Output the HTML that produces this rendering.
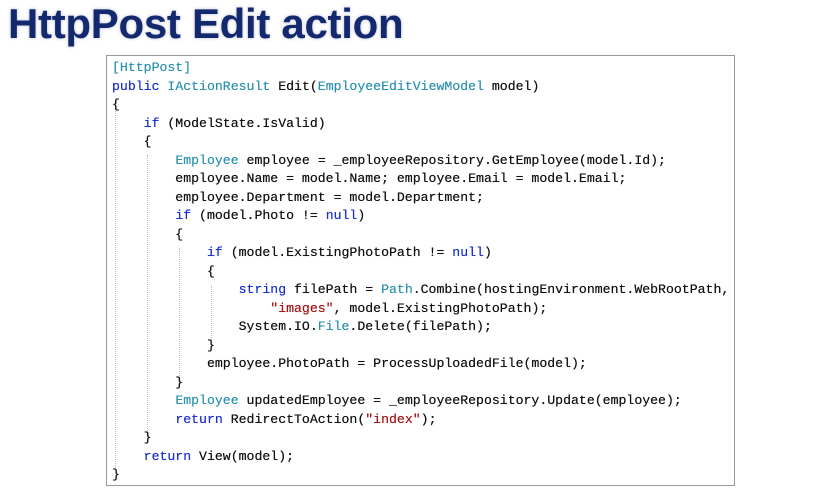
<!DOCTYPE html>
<html><head><style>
body{margin:0;width:839px;height:494px;background:#fff;position:relative;overflow:hidden}
h1{position:absolute;left:8px;top:0px;margin:0;font:bold 42px "Liberation Sans",sans-serif;color:#14286e;letter-spacing:-0.3px;text-shadow:0 0 3px rgba(20,40,110,.3)}
.box{position:absolute;left:106px;top:55px;width:629px;height:431px;border:1px solid #9a9a9a;box-sizing:border-box}
pre{position:absolute;left:112px;top:59px;margin:0;font:13.2px/18.5px "Liberation Mono",monospace;color:#111;text-shadow:0 0 .4px #111}
.k{color:#1a2fd0;text-shadow:0 0 .4px #1a2fd0}.t{color:#2b91af;text-shadow:0 0 .4px #2b91af}.s{color:#a31515;text-shadow:0 0 .4px #a31515}
.g{position:absolute;border-left:1px dotted #bbb;width:0}
</style></head><body>
<h1>HttpPost Edit action</h1>
<div class="box"></div>
<div class="g" style="left:115px;top:100px;height:370px"></div>
<div class="g" style="left:147px;top:155px;height:280px"></div>
<div class="g" style="left:179px;top:248px;height:130px"></div>
<div class="g" style="left:211px;top:285px;height:55px"></div>
<pre><span class="t">[HttpPost]</span>
<span class="k">public</span> <span class="t">IActionResult</span> Edit(<span class="t">EmployeeEditViewModel</span> model)
{
    <span class="k">if</span> (ModelState.IsValid)
    {
        <span class="t">Employee</span> employee = _employeeRepository.GetEmployee(model.Id);
        employee.Name = model.Name; employee.Email = model.Email;
        employee.Department = model.Department;
        <span class="k">if</span> (model.Photo != <span class="k">null</span>)
        {
            <span class="k">if</span> (model.ExistingPhotoPath != <span class="k">null</span>)
            {
                <span class="k">string</span> filePath = <span class="t">Path</span>.Combine(hostingEnvironment.WebRootPath,
                    <span class="s">"images"</span>, model.ExistingPhotoPath);
                System.IO.<span class="t">File</span>.Delete(filePath);
            }
            employee.PhotoPath = ProcessUploadedFile(model);
        }
        <span class="t">Employee</span> updatedEmployee = _employeeRepository.Update(employee);
        <span class="k">return</span> RedirectToAction(<span class="s">"index"</span>);
    }
    <span class="k">return</span> View(model);
}</pre>
</body></html>
